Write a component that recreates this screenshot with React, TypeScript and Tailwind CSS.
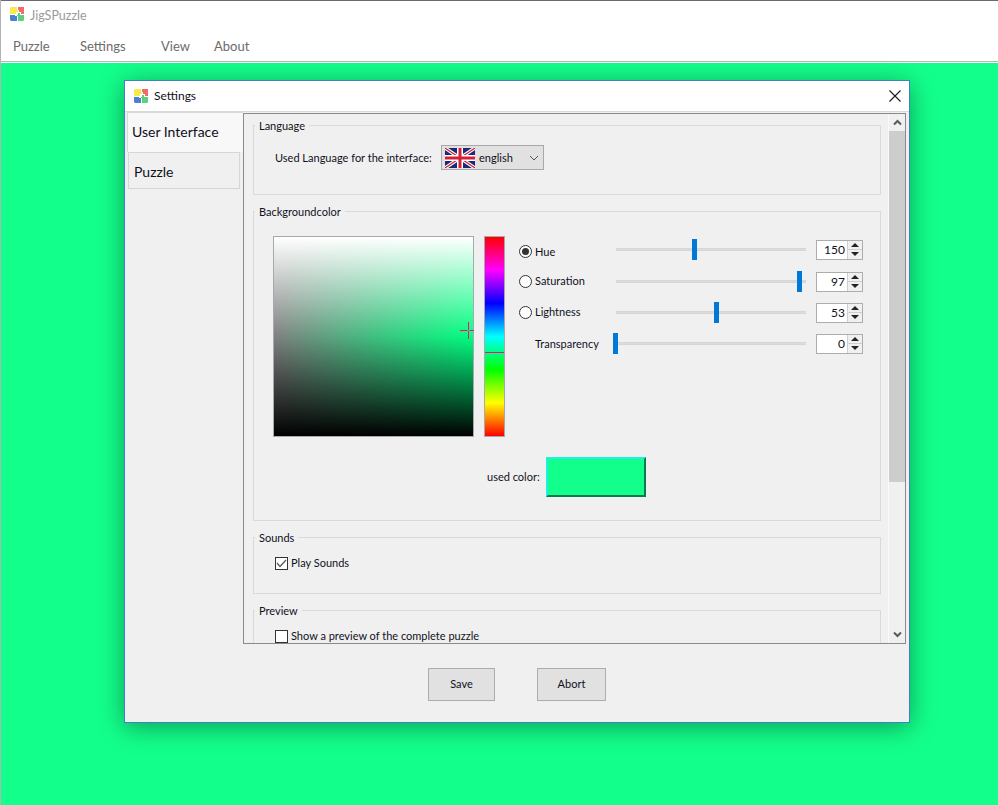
import React from "react";

const sliders = [
  { label: "Hue", value: 150, thumb: 76, radio: true, checked: true, rowClass: "mb-[1px]", labelClass: "mt-[4px]" },
  { label: "Saturation", value: 97, thumb: 181, radio: true, checked: false, rowClass: "", labelClass: "mt-[-1px]" },
  { label: "Lightness", value: 53, thumb: 98, radio: true, checked: false, rowClass: "", labelClass: "mt-[-1px]" },
  { label: "Transparency", value: 0, thumb: -3, radio: false, checked: false, rowClass: "", labelClass: "" },
];

const PuzzleIcon = () => (
  <svg width="14" height="14" viewBox="0 0 14 14" className="shrink-0">
    <path d="M1 0H7V3H8V5H6V7H0V1Z" fill="#f8e94c" />
    <path d="M8 0H14V7H11V5H9V3H8Z" fill="#f46a6a" />
    <path d="M0 8H5V9H7V14H1L0 13Z" fill="#4f80cf" />
    <path d="M7 8H8V6H10V8H14V13L13 14H8V9H7Z" fill="#5ad17a" />
  </svg>
);

const UkFlag = () => (
  <svg width="30" height="20" viewBox="0 0 30 20" className="shrink-0">
    <rect width="30" height="20" fill="#1a2a78" />
    <path d="M0 0L30 20M30 0L0 20" stroke="#ffffff" strokeWidth="3.5" />
    <path d="M0 0L30 20M30 0L0 20" stroke="#d22038" strokeWidth="1.2" />
    <path d="M15 0V20M0 10H30" stroke="#ffffff" strokeWidth="6" />
    <path d="M15 0V20M0 10H30" stroke="#d22038" strokeWidth="3" />
  </svg>
);

const Group = ({ title, className, children }: { title: string; className: string; children?: React.ReactNode }) => (
  <fieldset className={`border border-[#d9d9d9] min-w-0 pl-[19px] shrink-0 ${className}`}>
    <legend className="ml-[-18px] pl-[4px] pr-[4px] text-[11px] leading-[16px] text-[#10101c]">
      <span className="relative top-px">{title}</span>
    </legend>
    {children}
  </fieldset>
);

const SpinBox = ({ value }: { value: number }) => (
  <div className="w-[47px] h-[20px] border border-[#adadad] bg-white flex justify-end">
    <span className="flex-1 text-right pr-[2px] text-[12px] leading-[18px] text-[#10101c]">{value}</span>
    <div className="w-[15px] flex flex-col gap-px bg-[#cfcfcf] border-l border-[#cfcfcf]">
      <div className="flex-1 bg-[#f0f0f0] flex items-center justify-center">
        <div className="w-0 h-0 border-x-[4px] border-x-transparent border-b-[4px] border-b-[#222222]" />
      </div>
      <div className="flex-1 bg-[#f0f0f0] flex items-center justify-center">
        <div className="w-0 h-0 border-x-[4px] border-x-transparent border-t-[4px] border-t-[#222222]" />
      </div>
    </div>
  </div>
);

const SliderRow = ({ label, value, thumb, radio, checked, rowClass, labelClass }: (typeof sliders)[number]) => (
  <div className={`h-[31px] flex items-center ${rowClass}`}>
    <div className={`w-[97px] flex items-center gap-[3px] shrink-0 ${labelClass}`}>
      {radio ? (
        <span className="w-[13px] h-[13px] rounded-full border border-[#333333] bg-white flex items-center justify-center shrink-0">
          {checked && <span className="w-[7px] h-[7px] rounded-full bg-[#333333]" />}
        </span>
      ) : (
        <span className="w-[13px] shrink-0" />
      )}
      <span className="text-[11px] leading-[16px] text-[#10101c] whitespace-nowrap">{label}</span>
    </div>
    <div className="relative w-[190px] h-[3px] bg-[#dcdcdc] border-y border-[#d6d6d6] shrink-0">
      <div className="absolute top-[-10px] w-[5px] h-[21px] bg-[#0078d7]" style={{ left: thumb }} />
    </div>
    <div className="ml-[10px]">
      <SpinBox value={value} />
    </div>
  </div>
);

export default function App() {
  return (
    <div
      className="relative w-[998px] h-[805px] overflow-hidden bg-[#13ff8b] border-l border-[#b4b4b4] flex flex-col"
      style={{ fontFamily: 'Lato, "Noto Sans", sans-serif' }}
    >
      {/* Main window */}
      <header className="h-[63px] bg-white border-t border-b border-t-[#6a6a6a] border-b-white flex flex-col shrink-0">
        <div className="h-[29px] pl-[9px] pt-[6px] flex gap-[6px] items-start shrink-0">
          <PuzzleIcon />
          <span className="text-[12.5px] leading-[18px] text-[#9a9a9a]">JigSPuzzle</span>
        </div>
        <nav className="flex-1 flex border-b border-[#b8b8b8] text-[13px] leading-[18px] text-[#6b6b6b] pt-[7px]">
          <span className="ml-[12px] w-[36px]">Puzzle</span>
          <span className="ml-[31px] w-[46px]">Settings</span>
          <span className="ml-[35px] w-[27px]">View</span>
          <span className="ml-[26px]">About</span>
        </nav>
      </header>

      {/* Settings dialog */}
      <div className="absolute left-[123px] top-[80px] w-[786px] h-[643px] border border-[#3f7fd0] bg-[#f0f0f0] flex flex-col shadow-[0_4px_24px_rgba(0,0,0,0.38)]">
        <div className="h-[30px] bg-white flex items-center pl-[9px] pr-[9px] shrink-0">
          <PuzzleIcon />
          <span className="ml-[6px] text-[12px] text-[#10101c]">Settings</span>
          <svg width="12" height="12" viewBox="0 0 12 12" className="ml-auto mr-[-1px]">
            <path d="M0.5 0.5L11.5 11.5M11.5 0.5L0.5 11.5" stroke="#1a1a1a" strokeWidth="1.1" fill="none" />
          </svg>
        </div>

        <div className="h-[534px] flex shrink-0 border-t border-[#dadada]">
          {/* Tabs */}
          <div className="w-[118px] pl-[2px] shrink-0 flex flex-col">
            <div className="w-[116px] h-[40px] bg-[#f8f8f8] border-l border-t border-[#d8d8d8] pl-[4px] text-[14px] leading-[38px] text-[#10101c]">
              User Interface
            </div>
            <div className="ml-[1px] w-[112px] h-[37px] border border-[#d6d6d6] pl-[5px] text-[14px] leading-[38px] text-[#10101c]">
              Puzzle
            </div>
          </div>

          {/* Scrollable settings panel */}
          <div className="w-[663px] h-[531px] mt-[1px] border border-[#8a8a8a] flex overflow-hidden shrink-0">
            <div className="w-[644px] shrink-0 pl-[9px] pt-[3px] flex flex-col gap-[8px] overflow-hidden">
              <Group title="Language" className="w-[628px] h-[78px]">
                <div className="h-[25px] mt-[12px] pl-[2px] flex items-center gap-[6px]">
                  <span className="w-[160px] pt-[2px] text-[11px] whitespace-nowrap text-[#10101c]">Used Language for the interface:</span>
                  <div className="w-[103px] h-[25px] border border-[#a9a9a9] bg-[#e1e1e1] flex items-center pl-[3px] pr-[4px]">
                    <UkFlag />
                    <span className="ml-[4px] pt-[2px] text-[11px] text-[#10101c]">english</span>
                    <svg width="10" height="6" viewBox="0 0 10 6" className="ml-auto">
                      <path d="M1 1L5 5L9 1" stroke="#555555" fill="none" />
                    </svg>
                  </div>
                </div>
              </Group>

              <Group title="Backgroundcolor" className="w-[628px] h-[318px]">
                <div className="flex mt-[17px]">
                  {/* Colour field */}
                  <div className="relative w-[201px] h-[201px] border border-[#a8a8b0] bg-[linear-gradient(to_right,#808080,#00ff80)] shrink-0">
                    <div className="absolute inset-0 bg-[linear-gradient(to_bottom,#ffffff,rgba(255,255,255,0)_50%,rgba(0,0,0,0)_50%,#000000)]" />
                    <svg width="14" height="17" viewBox="0 0 14 17" className="absolute left-[186px] top-[85px]">
                      <path d="M0 8.5H7.5M9.5 8.5H14M8.5 0V8M8.5 9V17" stroke="#ff0a78" strokeWidth="1" fill="none" />
                    </svg>
                  </div>
                  {/* Hue strip */}
                  <div className="relative ml-[10px] w-[21px] h-[201px] border border-[#a8a8b0] bg-[linear-gradient(to_bottom,#ff0000,#ff00ff_16.67%,#0000ff_33.33%,#00ffff_50%,#00ff00_66.67%,#ffff00_83.33%,#ff0000)] shrink-0">
                    <div className="absolute left-0 right-0 top-[115px] h-px bg-[#ff0a78]" />
                  </div>
                  <div className="ml-[14px] mt-[-2px]">
                    {sliders.map((s) => (
                      <SliderRow key={s.label} {...s} />
                    ))}
                  </div>
                </div>
                <div className="mt-[20px] ml-[214px] flex items-center gap-[5px]">
                  <span className="w-[54px] text-[11px] whitespace-nowrap text-[#10101c]">used color:</span>
                  <div className="w-[100px] h-[40px] bg-[#13ff8b] border-2 border-t-[#20f0e0] border-l-[#20f0e0] border-r-[#0b7a50] border-b-[#0b7a50]" />
                </div>
              </Group>

              <Group title="Sounds" className="w-[628px] h-[65px]">
                <label className="flex items-center gap-[3px] mt-[9px] ml-[2px]">
                  <span className="w-[13px] h-[13px] border border-[#333333] bg-white flex items-center justify-center shrink-0">
                    <svg width="11" height="9" viewBox="0 0 11 9">
                      <path d="M1 4L4 7.5L10 1" stroke="#555555" strokeWidth="1.2" fill="none" />
                    </svg>
                  </span>
                  <span className="text-[11px] leading-[18px] text-[#10101c]">Play Sounds</span>
                </label>
              </Group>

              <Group title="Preview" className="w-[628px] h-[64px]">
                <label className="flex items-center gap-[3px] mt-[9px] ml-[2px]">
                  <span className="w-[13px] h-[13px] border border-[#333333] bg-white shrink-0" />
                  <span className="text-[11px] leading-[18px] text-[#10101c]">Show a preview of the complete puzzle</span>
                </label>
              </Group>
            </div>

            {/* Scrollbar */}
            <div className="w-[17px] border-l border-[#fafafa] flex flex-col shrink-0">
              <div className="h-[17px] flex items-center justify-center">
                <svg width="9" height="7" viewBox="0 0 9 7">
                  <path d="M1 5.5L4.5 2L8 5.5" stroke="#5a5a5a" strokeWidth="2" fill="none" />
                </svg>
              </div>
              <div className="h-[351px] bg-[#cdcdcd]" />
              <div className="flex-1" />
              <div className="h-[17px] flex items-center justify-center">
                <svg width="9" height="7" viewBox="0 0 9 7">
                  <path d="M1 1.5L4.5 5L8 1.5" stroke="#5a5a5a" strokeWidth="2" fill="none" />
                </svg>
              </div>
            </div>
          </div>
        </div>

        {/* Footer buttons */}
        <div className="flex-1 flex items-start pl-[303px] pt-[23px] gap-[42px]">
          <button className="w-[67px] h-[33px] border border-[#adadad] bg-[#e1e1e1] text-[11px] text-[#10101c]">Save</button>
          <button className="w-[69px] h-[33px] border border-[#adadad] bg-[#e1e1e1] text-[11px] text-[#10101c]">Abort</button>
        </div>
      </div>
    </div>
  );
}
